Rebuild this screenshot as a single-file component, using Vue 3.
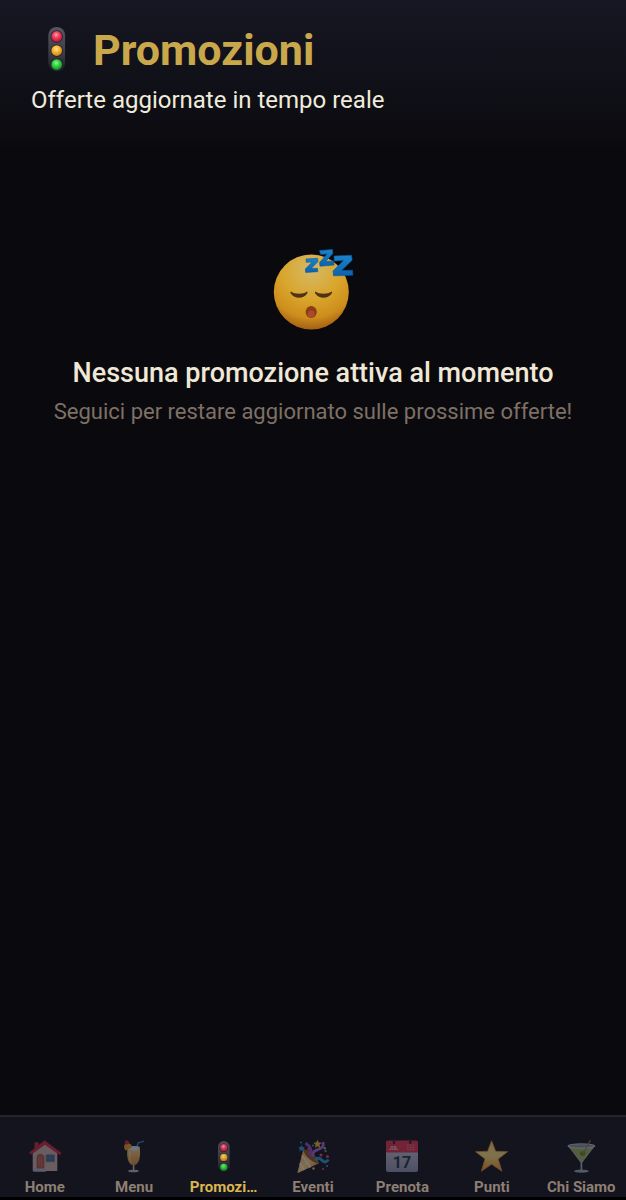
<template>
  <div class="page">

    <!-- shared icons -->
    <svg class="sprite" width="0" height="0" aria-hidden="true">
      <defs>
        <radialGradient id="g-red" cx="0.45" cy="0.35" r="0.65">
          <stop offset="0" stop-color="#ff9fae" />
          <stop offset="0.45" stop-color="#ee3f5c" />
          <stop offset="1" stop-color="#bd1836" />
        </radialGradient>
        <radialGradient id="g-yellow" cx="0.45" cy="0.35" r="0.65">
          <stop offset="0" stop-color="#ffe58b" />
          <stop offset="0.45" stop-color="#f7b735" />
          <stop offset="1" stop-color="#cf7d16" />
        </radialGradient>
        <radialGradient id="g-green" cx="0.45" cy="0.35" r="0.65">
          <stop offset="0" stop-color="#8df58b" />
          <stop offset="0.45" stop-color="#37d544" />
          <stop offset="1" stop-color="#128d24" />
        </radialGradient>
        <linearGradient id="g-case" x1="0" y1="0" x2="0" y2="1">
          <stop offset="0" stop-color="#565762" />
          <stop offset="0.6" stop-color="#3a3b45" />
          <stop offset="1" stop-color="#1b1b22" />
        </linearGradient>
        <linearGradient id="g-drink" x1="0" y1="0" x2="0" y2="1">
          <stop offset="0" stop-color="#f3dcb0" />
          <stop offset="0.5" stop-color="#f0b65c" />
          <stop offset="1" stop-color="#d58a4c" />
        </linearGradient>
        <linearGradient id="g-star" x1="0" y1="0" x2="0" y2="1">
          <stop offset="0" stop-color="#ffd970" />
          <stop offset="0.5" stop-color="#ffe680" />
          <stop offset="1" stop-color="#f29b2e" />
        </linearGradient>
        <linearGradient id="g-cone" x1="0" y1="0" x2="1" y2="1">
          <stop offset="0" stop-color="#f0a13c" />
          <stop offset="0.5" stop-color="#ffdf8d" />
          <stop offset="1" stop-color="#d97a24" />
        </linearGradient>
        <linearGradient id="g-paper" x1="0" y1="0" x2="0" y2="1">
          <stop offset="0" stop-color="#d6d9ea" />
          <stop offset="1" stop-color="#9396b8" />
        </linearGradient>
      </defs>

      <symbol id="i-traffic" viewBox="0 0 36 36">
        <rect x="12" y="2" width="11.6" height="31" rx="5.8" fill="url(#g-case)" />
        <g fill="#25262e">
          <circle cx="17.8" cy="8.7" r="4.3" />
          <circle cx="17.8" cy="18.5" r="4.3" />
          <circle cx="17.8" cy="28.2" r="4.3" />
        </g>
        <circle cx="17.8" cy="8.6" r="3.7" fill="url(#g-red)" />
        <circle cx="17.8" cy="18.4" r="3.7" fill="url(#g-yellow)" />
        <circle cx="17.8" cy="28.1" r="3.7" fill="url(#g-green)" />
      </symbol>

      <symbol id="i-home" viewBox="0 0 36 36">
        <path d="M7.5 3.4h4.2v7H7.5z" fill="#c9354a" />
        <path d="M5.7 13.5 18 4l12.3 9.5V32H5.7z" fill="#d0b7b5" />
        <path d="M17.6 1.5 2.4 13.4l1.2 2.2L18 5.6l15 10.4 1.3-2.1z" fill="#d62b45" stroke="#a81d34" stroke-width="0.5" />
        <path d="M10 29.6V18.5c0-4.4 7-4.4 7 0v11.1z" fill="#b95c51" stroke="#8b473e" stroke-width="0.6" />
        <path d="M12.2 18v9M14.8 18v9" stroke="#d08779" stroke-width="0.6" />
        <rect x="19" y="15.8" width="8.5" height="7" fill="#346f9e" stroke="#a37868" stroke-width="0.8" />
        <path d="M23.2 16v6.5M19.3 19h8" stroke="#6d9dc0" stroke-width="0.4" />
        <rect x="6" y="29.6" width="13.2" height="3.2" rx="1" fill="#b5b4c7" />
      </symbol>

      <symbol id="i-menu" viewBox="0 0 36 36">
        <path d="M20 11 22.2 3.8 28 2.1" fill="none" stroke="#398bc7" stroke-width="1.4" />
        <path d="M11.8 7.6c-1.4 7-.9 18.7 5.7 18.7s7.4-11.7 6-18.7z" fill="url(#g-drink)" />
        <ellipse cx="18.5" cy="9.3" rx="4.3" ry="2.3" fill="#d8ecf5" />
        <path d="M14 13c-.6 4-.2 8 1.6 10.5" fill="none" stroke="#fff3d6" stroke-width="0.9" opacity="0.7" />
        <path d="M17.6 26v5" stroke="#b9c3d6" stroke-width="1.6" />
        <ellipse cx="17.5" cy="32" rx="5.3" ry="1.3" fill="#b2bed2" />
        <path d="M8.3 6.3c3-3.5 7-2 8 1.8l-6.8 3.5c-1-1.3-1.5-3.3-1.2-5.3z" fill="#f0a331" />
        <circle cx="10.8" cy="3.4" r="2.1" fill="#d32739" />
      </symbol>

      <symbol id="i-party" viewBox="0 0 36 36">
        <path d="M8.3 10.3 2.3 34.3 24 24.3C21.5 17 15.5 11.5 8.3 10.3z" fill="url(#g-cone)" />
        <path d="M7 16.5 15.5 28.3M4.9 24.3l4.3 6.6" stroke="#fff0cc" stroke-width="2" />
        <path d="M8.3 10.3C15.5 11.5 21.5 17 24 24.3c-4.5.3-15-6-15.7-14z" fill="#9c5725" />
        <path d="M14 16c4-4 1-9-3.5-12" fill="none" stroke="#8b55cf" stroke-width="3" />
        <path d="M18 17.5c-1-5 2-6 6-7.5s5-3 4-7" fill="none" stroke="#a967dc" stroke-width="3" />
        <path d="M20 21c3-3 5-2 7 .3s5 2.2 6.300-.8" fill="none" stroke="#2b9fde" stroke-width="3" />
        <path d="m22.5.8 1.3 2.7 2.9.3-2.2 2 .7 2.900-2.700-1.400-2.500 1.400.5-2.900-2.100-2 2.800-.3z" fill="#f4bd35" />
        <path d="m6.500 6 1.200 2 2.300.3-1.600 1.700.4 2.200-2.300-1-2 1 .3-2.200-1.500-1.700 2.200-.3z" fill="#289de3" />
        <g fill="#ed4c77">
          <circle cx="13.5" cy="10" r="1.3" />
          <circle cx="26" cy="16" r="1.5" />
          <circle cx="32.5" cy="17.5" r="1.5" />
          <circle cx="28" cy="30" r="1" />
        </g>
        <g fill="#3f9fe0">
          <circle cx="6" cy="3.5" r="1" />
          <circle cx="18" cy="6.5" r="1" />
          <circle cx="30.5" cy="12" r="1.2" />
          <circle cx="32" cy="27" r="1" />
        </g>
        <path d="m18 28 2 1-1 2-2-1zM29 8l2 .5-.5 2-2-.5z" fill="#f2c244" />
      </symbol>

      <symbol id="i-calendar" viewBox="0 0 36 36">
        <rect x="2" y="2" width="32" height="31" rx="2" fill="url(#g-paper)" />
        <path d="M4 1.5h28a2 2 0 0 1 2 2v10H2v-10a2 2 0 0 1 2-2z" fill="#e53650" />
        <path d="M10 1v3M26.3 1v3" stroke="#45212d" stroke-width="2.4" stroke-linecap="round" />
        <path d="M23 6h8M23 8.3h8M23 10.6h8" stroke="#f38796" stroke-width="1" stroke-dasharray="1 0.5" />
      </symbol>

      <symbol id="i-star" viewBox="0 0 36 36">
        <path d="m17.6 1.8 4.1 10.5 12 .4-9.5 7.3 3.7 12.2-10.3-7-10.2 7L11 20 1.6 12.7l12-.4z" fill="url(#g-star)" stroke="#e6952e" stroke-width="0.8" stroke-linejoin="round" />
      </symbol>

      <symbol id="i-cocktail" viewBox="0 0 36 36">
        <path d="M4.8 6.8h27.3L19.3 23.5h-1.800z" fill="#aeb9bd" />
        <path d="M7.5 9h22L19 22.5h-1.300z" fill="#a3b965" />
        <ellipse cx="18.4" cy="7" rx="13.6" ry="2.2" fill="#8b979f" stroke="#dbe4ec" stroke-width="0.8" />
        <ellipse cx="19.7" cy="14.5" rx="2.8" ry="2.3" fill="#6f8b27" />
        <path d="M20 15 27.4 1.3" stroke="#9b8078" stroke-width="1.2" />
        <path d="M18.4 22v9.5" stroke="#aeb9ca" stroke-width="1.7" />
        <ellipse cx="18.4" cy="32.2" rx="7.3" ry="1.6" fill="#a5b0c2" />
      </symbol>
    </svg>

    <header class="header">
      <h1 class="title">
        <svg class="title-icon" aria-hidden="true"><use href="#i-traffic" /></svg>
        <span>Promozioni</span>
      </h1>
      <p class="subtitle">Offerte aggiornate in tempo reale</p>
    </header>

    <main class="empty">
      <svg class="empty-icon" viewBox="5 2 96 96" aria-hidden="true">
        <defs>
          <radialGradient id="g-face" cx="0.5" cy="0.2" r="0.8">
            <stop offset="0" stop-color="#d6b968" />
            <stop offset="0.5" stop-color="#d9a52b" />
            <stop offset="0.8" stop-color="#cd8e1c" />
            <stop offset="1" stop-color="#a65f13" />
          </radialGradient>
          <linearGradient id="g-zed" x1="0" y1="0" x2="0" y2="1">
            <stop offset="0" stop-color="#1c83cb" />
            <stop offset="1" stop-color="#0a63ad" />
          </linearGradient>
        </defs>
        <circle cx="51.3" cy="52" r="37.500" fill="url(#g-face)" />
        <path d="M31 51.500c3.500 3 12.500 3 16 0 .8.500.8 1.300 0 2.200-3.500 5.500-12.500 5.500-16 0-.8-.9-.8-1.700 0-2.200zM55.500 51.500c3.500 3 12.500 3 16 0 .8.500.8 1.300 0 2.200-3.500 5.500-12.500 5.500-16 0-.8-.9-.8-1.700 0-2.200z" fill="#513216" />
        <ellipse cx="51.200" cy="72" rx="5.600" ry="6" fill="#8c3d18" />
        <ellipse cx="51.200" cy="74" rx="3.600" ry="3.500" fill="#aa4a28" />
        <g fill="url(#g-zed)" stroke="#0d5699" stroke-width="0.6" stroke-linejoin="round">
          <path d="m46 19 11.500-.7.500 3.300-6.800 6.900 6.300-.3.200 3.500-12 .7-.4-3.300 6.900-7.100-6 .3z" />
          <path d="m59.500 10.500 13-1 .4 4-7.200 8 8-.6.300 4.200-14 1.100-.4-3.800 7.400-8.400-6.300.5z" />
          <path d="m74 16 17.500-.8.700 5-10.700 10.400 11-.4.300 5-19.300.6-.5-4.800L83.500 20.500l-9.200.5z" />
        </g>
      </svg>
      <h2 class="empty-title">Nessuna promozione attiva al momento</h2>
      <p class="empty-text">Seguici per restare aggiornato sulle prossime offerte!</p>
    </main>

    <nav class="tabs">
      <a
        v-for="tab in tabs"
        :key="tab.icon"
        href="#"
        class="tab"
        :class="{ active: tab.icon === current }"
        @click.prevent="current = tab.icon"
      >
        <svg class="tab-icon" viewBox="0 0 36 36" aria-hidden="true">
          <use :href="'#i-' + tab.icon" width="36" height="36" />
          <template v-if="tab.icon === 'calendar'">
            <text class="cal-month" x="9.5" y="11" text-anchor="middle">JUL</text>
            <text class="cal-day" x="18" y="29" text-anchor="middle">17</text>
          </template>
        </svg>
        <span class="tab-label">{{ tab.label }}</span>
      </a>
    </nav>

  </div>
</template>

<script setup>
import { ref } from "vue"

const current = ref("traffic")

const tabs = [
  { icon: "home", label: "Home" },
  { icon: "menu", label: "Menu" },
  { icon: "traffic", label: "Promozi…" },
  { icon: "party", label: "Eventi" },
  { icon: "calendar", label: "Prenota" },
  { icon: "star", label: "Punti" },
  { icon: "cocktail", label: "Chi Siamo" }
]
</script>

<style>
body {
  background: #0a0a0e;
}
</style>

<style scoped>
.page {
  min-height: 100vh;
  display: flex;
  flex-direction: column;
  background: #0a0a0e;
  font-family: Roboto, "Liberation Sans", sans-serif;
}

.sprite {
  position: absolute;
}

.header {
  padding: 24px 31px 36px;
  background: linear-gradient(180deg, #171724, #0a0a0e);
}

.title {
  display: flex;
  align-items: center;
  gap: 10px;
  margin: 0;
  color: #c9a84c;
  font-size: 43px;
  font-weight: 700;
  line-height: 52px;
}

.title-icon {
  width: 52px;
  height: 52px;
}

.subtitle {
  margin: 8px 0 0;
  color: #f0ebdc;
  font-size: 24px;
  line-height: 32px;
}

.empty {
  flex: 1;
  display: flex;
  flex-direction: column;
  align-items: center;
  padding: 90px 20px;
  text-align: center;
}

.empty-icon {
  width: 96px;
  height: 96px;
}

.empty-title {
  margin: 17px 0 5px;
  color: #f0e8d6;
  font-size: 27px;
  font-weight: 500;
  line-height: 36px;
}

.empty-text {
  margin: 0;
  color: #7e7065;
  font-size: 22px;
  line-height: 32px;
}

.tabs {
  display: grid;
  grid-template-columns: repeat(7, minmax(0, 1fr));
  padding-top: 22px;
  background: #14141f;
  border-top: 2px solid #25252f;
  border-bottom: 3px solid #000;
}

.tab {
  display: flex;
  flex-direction: column;
  align-items: center;
  gap: 2px;
  padding: 0 8px;
  color: #8d7f73;
  text-decoration: none;
}

.tab-icon {
  width: 36px;
  height: 36px;
  opacity: 0.45;
}

.tab-label {
  white-space: nowrap;
  font-size: 15px;
  font-weight: 700;
  line-height: 20px;
}

.tab.active {
  color: #d9b652;
}

.tab.active .tab-icon {
  opacity: 0.9;
}

.cal-month {
  fill: #fbd5da;
  font-size: 5px;
  font-weight: 700;
}

.cal-day {
  fill: #263748;
  font-size: 16px;
  font-weight: 700;
}
</style>
